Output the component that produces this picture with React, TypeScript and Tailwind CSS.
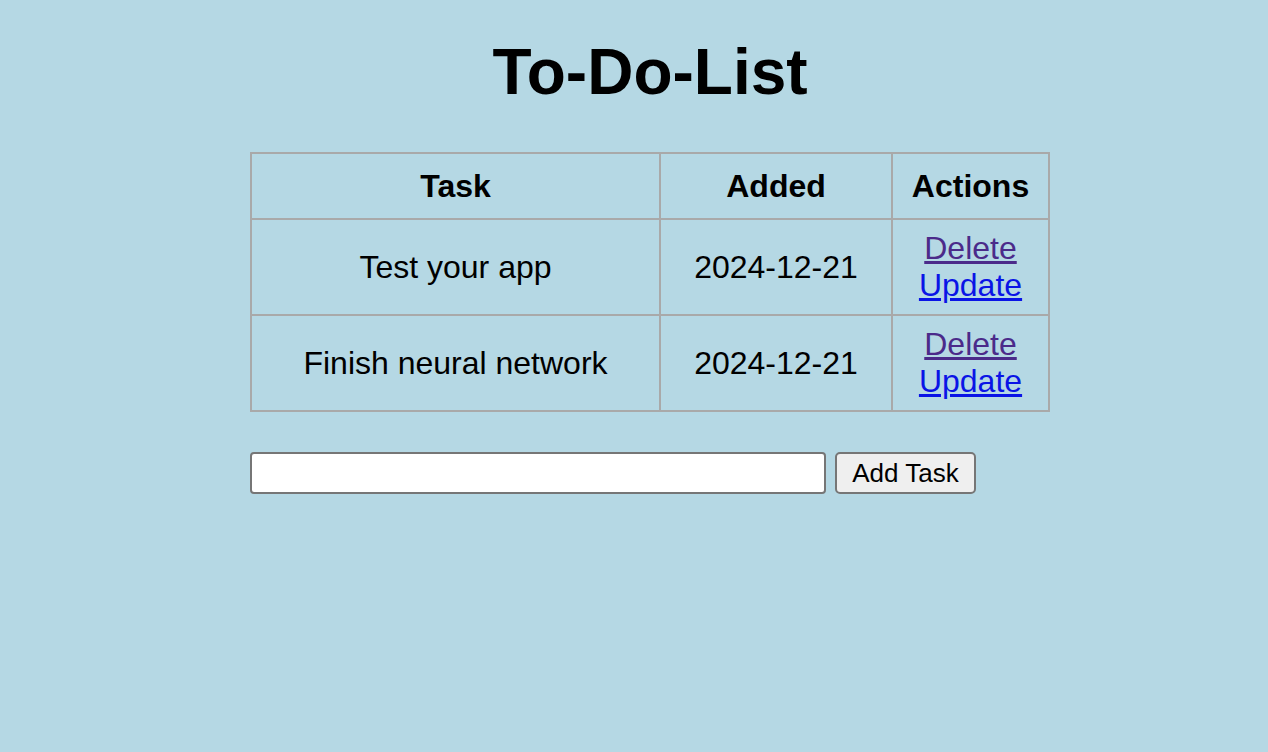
import React from "react";

const rows = [
  { task: "Test your app", added: "2024-12-21" },
  { task: "Finish neural network", added: "2024-12-21" },
];

export default function App() {
  return (
    <div
      className="min-h-[752px] w-full bg-[#b5d8e4] text-black"
      style={{ fontFamily: '"Liberation Sans", Arial, Helvetica, sans-serif' }}
    >
      <div className="w-[800px] ml-[250px] pt-[35px]">
        <h1 className="text-center text-[64px] leading-[74px] font-bold m-0">To-Do-List</h1>
        <table className="mt-[43px] w-[798px] table-fixed border-collapse text-[32px] leading-[37px]">
          <colgroup>
            <col className="w-[409px]" />
            <col className="w-[232px]" />
            <col className="w-[157px]" />
          </colgroup>
          <thead>
            <tr>
              <th className="h-[66px] border-2 border-[#a9a9a9] text-center font-bold p-0">Task</th>
              <th className="h-[66px] border-2 border-[#a9a9a9] text-center font-bold p-0">Added</th>
              <th className="h-[66px] border-2 border-[#a9a9a9] text-center font-bold p-0">Actions</th>
            </tr>
          </thead>
          <tbody>
            {rows.map((r, i) => (
              <tr key={i}>
                <td className="h-[96px] border-2 border-[#a9a9a9] text-center p-0">{r.task}</td>
                <td className="h-[96px] border-2 border-[#a9a9a9] text-center p-0">{r.added}</td>
                <td className="h-[96px] border-2 border-[#a9a9a9] text-center p-0">
                  <a href="#" className="text-[#4b2a8a] underline">Delete</a>
                  <br />
                  <a href="#" className="text-[#0a14e6] underline">Update</a>
                </td>
              </tr>
            ))}
          </tbody>
        </table>
        <div className="mt-[40px] flex items-center gap-[9px]">
          <input
            type="text"
            className="w-[576px] h-[42px] bg-white border-2 border-[#767676] rounded-[4px] outline-none"
          />
          <button className="w-[141px] h-[42px] bg-[#efefef] border-2 border-[#767676] rounded-[5px] text-[26px] leading-[30px]">
            Add Task
          </button>
        </div>
      </div>
    </div>
  );
}
